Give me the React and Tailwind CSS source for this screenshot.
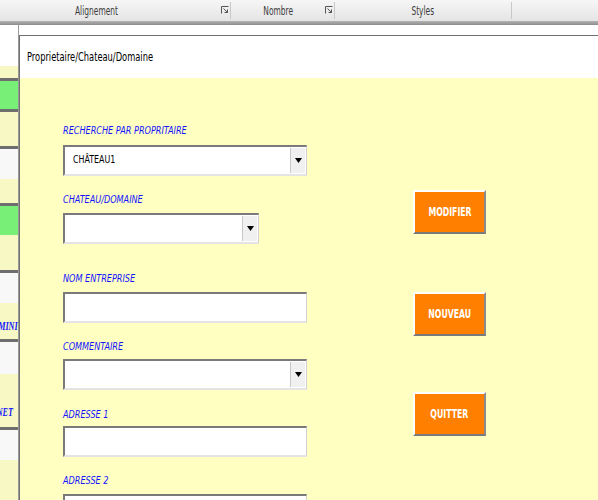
import React from "react";

const narrow = { fontFamily: '"DejaVu Sans Condensed", "Liberation Sans", sans-serif' };

function Launcher() {
  return (
    <svg width="8" height="9" viewBox="0 0 8 9" className="block">
      <path d="M0.5 0.5H7.5M0.5 0.5V7.5" stroke="#555" strokeWidth="1" fill="none" />
      <path d="M2.5 2.5L6.5 6.5M6.5 3.5V6.5H3.5" stroke="#555" strokeWidth="1" fill="none" />
    </svg>
  );
}

function Squeeze({ children, className = "", origin = "origin-left" }) {
  return <span className={`inline-block whitespace-nowrap ${origin} ${className}`}>{children}</span>;
}

function Label({ children, className = "" }) {
  return (
    <div
      className={`h-[14px] leading-[14px] text-[11px] italic text-[#1414ff] ${className}`}
      style={narrow}
    >
      <Squeeze className="scale-x-[0.82]">{children}</Squeeze>
    </div>
  );
}

function Field({ width = "w-[244px]", className = "", value, combo }) {
  return (
    <div
      className={`${width} ${className} h-[31px] flex bg-white border-t-2 border-l-2 border-t-[#7a7a7a] border-l-[#7a7a7a] border-b-2 border-r border-b-[#e4e4e4] border-r-[#d0d0d0]`}
    >
      <div className="flex-1 flex items-center pl-[8px] text-[11px] text-black" style={narrow}>
        {value && <Squeeze className="scale-x-[0.8]">{value}</Squeeze>}
      </div>
      {combo && (
        <div className="w-[15px] my-[1px] mr-[1px] bg-[#f0f0f0] border-l border-[#c8c8c8] flex items-center justify-center">
          <svg width="7" height="5" viewBox="0 0 7 5">
            <path d="M0 0H7L3.5 5Z" fill="#000" />
          </svg>
        </div>
      )}
    </div>
  );
}

function OrangeButton({ children, className = "" }) {
  return (
    <div
      className={`${className} w-[73px] h-[44px] bg-[#ff8000] border-t-2 border-l-2 border-t-white border-l-white border-b-2 border-r-2 border-b-[#7a7a7a] border-r-[#8a8a8a] flex items-center justify-center text-white text-[12px] font-bold`}
      style={narrow}
    >
      <Squeeze className="scale-x-[0.72]" origin="origin-center">
        {children}
      </Squeeze>
    </div>
  );
}

function SheetRow({ h, kind, text, pad = "" }) {
  const bg = kind === "green" ? "bg-[#78f078]" : kind === "white" ? "bg-[#f8f8f8]" : "bg-[#f8f8c4]";
  return (
    <div className={`${bg} overflow-hidden flex items-end justify-end ${pad}`} style={{ height: h }}>
      {text && (
        <span
          className="inline-block origin-right scale-x-[0.68] text-[12px] leading-[14px] italic font-bold text-[#1414ff] whitespace-nowrap"
          style={{ fontFamily: '"Liberation Serif", serif' }}
        >
          {text}
        </span>
      )}
    </div>
  );
}

function SheetLine() {
  return <div className="h-[3px] bg-[#6e6e6e]" />;
}

export default function App() {
  return (
    <div className="w-[598px] h-[500px] overflow-hidden bg-white flex flex-col" style={narrow}>
      {/* ribbon */}
      <div className="h-[21px] shrink-0 flex items-center bg-gradient-to-b from-[#f6f6f6] to-[#e4e4e4] text-[13px] text-[#3c3c3c]">
        <div className="w-[221px] h-full flex items-center pl-[75px]">
          <Squeeze className="scale-x-[0.64]">Alignement</Squeeze>
        </div>
        <Launcher />
        <div className="ml-[1px] w-px h-[17px] bg-[#c8c8c8]" />
        <div className="w-[94px] h-full flex items-center justify-center">
          <Squeeze className="scale-x-[0.64]" origin="origin-center">Nombre</Squeeze>
        </div>
        <Launcher />
        <div className="ml-[1px] w-px h-[17px] bg-[#c8c8c8]" />
        <div className="w-[176px] h-full flex items-center justify-center">
          <Squeeze className="scale-x-[0.64]" origin="origin-center">Styles</Squeeze>
        </div>
        <div className="w-px h-[17px] bg-[#c8c8c8]" />
      </div>
      <div className="h-[4px] shrink-0 bg-gradient-to-b from-[#b4b4b4] to-[#8c8c8c]" />

      <div className="flex flex-1 min-h-0">
        {/* sheet visible behind the form */}
        <div className="w-[19px] shrink-0 flex flex-col border-r border-[#9a9a9a]">
          <div className="h-[41px] bg-white" />
          <SheetRow h={13} kind="yellow" />
          <SheetLine />
          <SheetRow h={28} kind="green" />
          <SheetLine />
          <SheetRow h={34} kind="yellow" />
          <SheetLine />
          <SheetRow h={31} kind="white" />
          <SheetRow h={24} kind="yellow" />
          <SheetLine />
          <SheetRow h={29} kind="green" />
          <SheetRow h={36} kind="yellow" />
          <SheetLine />
          <SheetRow h={30} kind="white" />
          <SheetRow h={36} kind="yellow" text="MINI" pad="pb-[6px]" />
          <SheetLine />
          <SheetRow h={33} kind="white" />
          <SheetRow h={53} kind="yellow" text="NET" pad="pb-[8px] pr-[5px]" />
          <SheetLine />
          <SheetRow h={31} kind="white" />
          <SheetRow h={40} kind="yellow" />
        </div>

        {/* form window */}
        <div className="flex-1 mt-[10px] flex flex-col border-t border-l border-[#707070] bg-white">
          <div className="h-[42px] shrink-0 flex items-center pl-[7px] text-[13px] text-black">
            <Squeeze className="scale-x-[0.71]">Proprietaire/Chateau/Domaine</Squeeze>
          </div>
          <div className="flex-1 bg-[#ffffc2] flex">
            <div className="pl-[43px] pt-[46px] flex flex-col">
              <Label>RECHERCHE PAR PROPRITAIRE</Label>
              <Field className="mt-[7px]" value="CHÂTEAU1" combo />
              <Label className="mt-[17px]">CHATEAU/DOMAINE</Label>
              <Field className="mt-[6px]" width="w-[196px]" combo />
              <Label className="mt-[28px]">NOM ENTREPRISE</Label>
              <Field className="mt-[6px]" />
              <Label className="mt-[17px]">COMMENTAIRE</Label>
              <Field className="mt-[5px]" combo />
              <Label className="mt-[18px]">ADRESSE 1</Label>
              <Field className="mt-[4px]" />
              <Label className="mt-[17px]">ADRESSE 2</Label>
              <Field className="mt-[6px]" />
            </div>
            <div className="ml-[106px] pt-[112px] flex flex-col">
              <OrangeButton>MODIFIER</OrangeButton>
              <OrangeButton className="mt-[58px]">NOUVEAU</OrangeButton>
              <OrangeButton className="mt-[56px]">QUITTER</OrangeButton>
            </div>
          </div>
        </div>
      </div>
    </div>
  );
}
